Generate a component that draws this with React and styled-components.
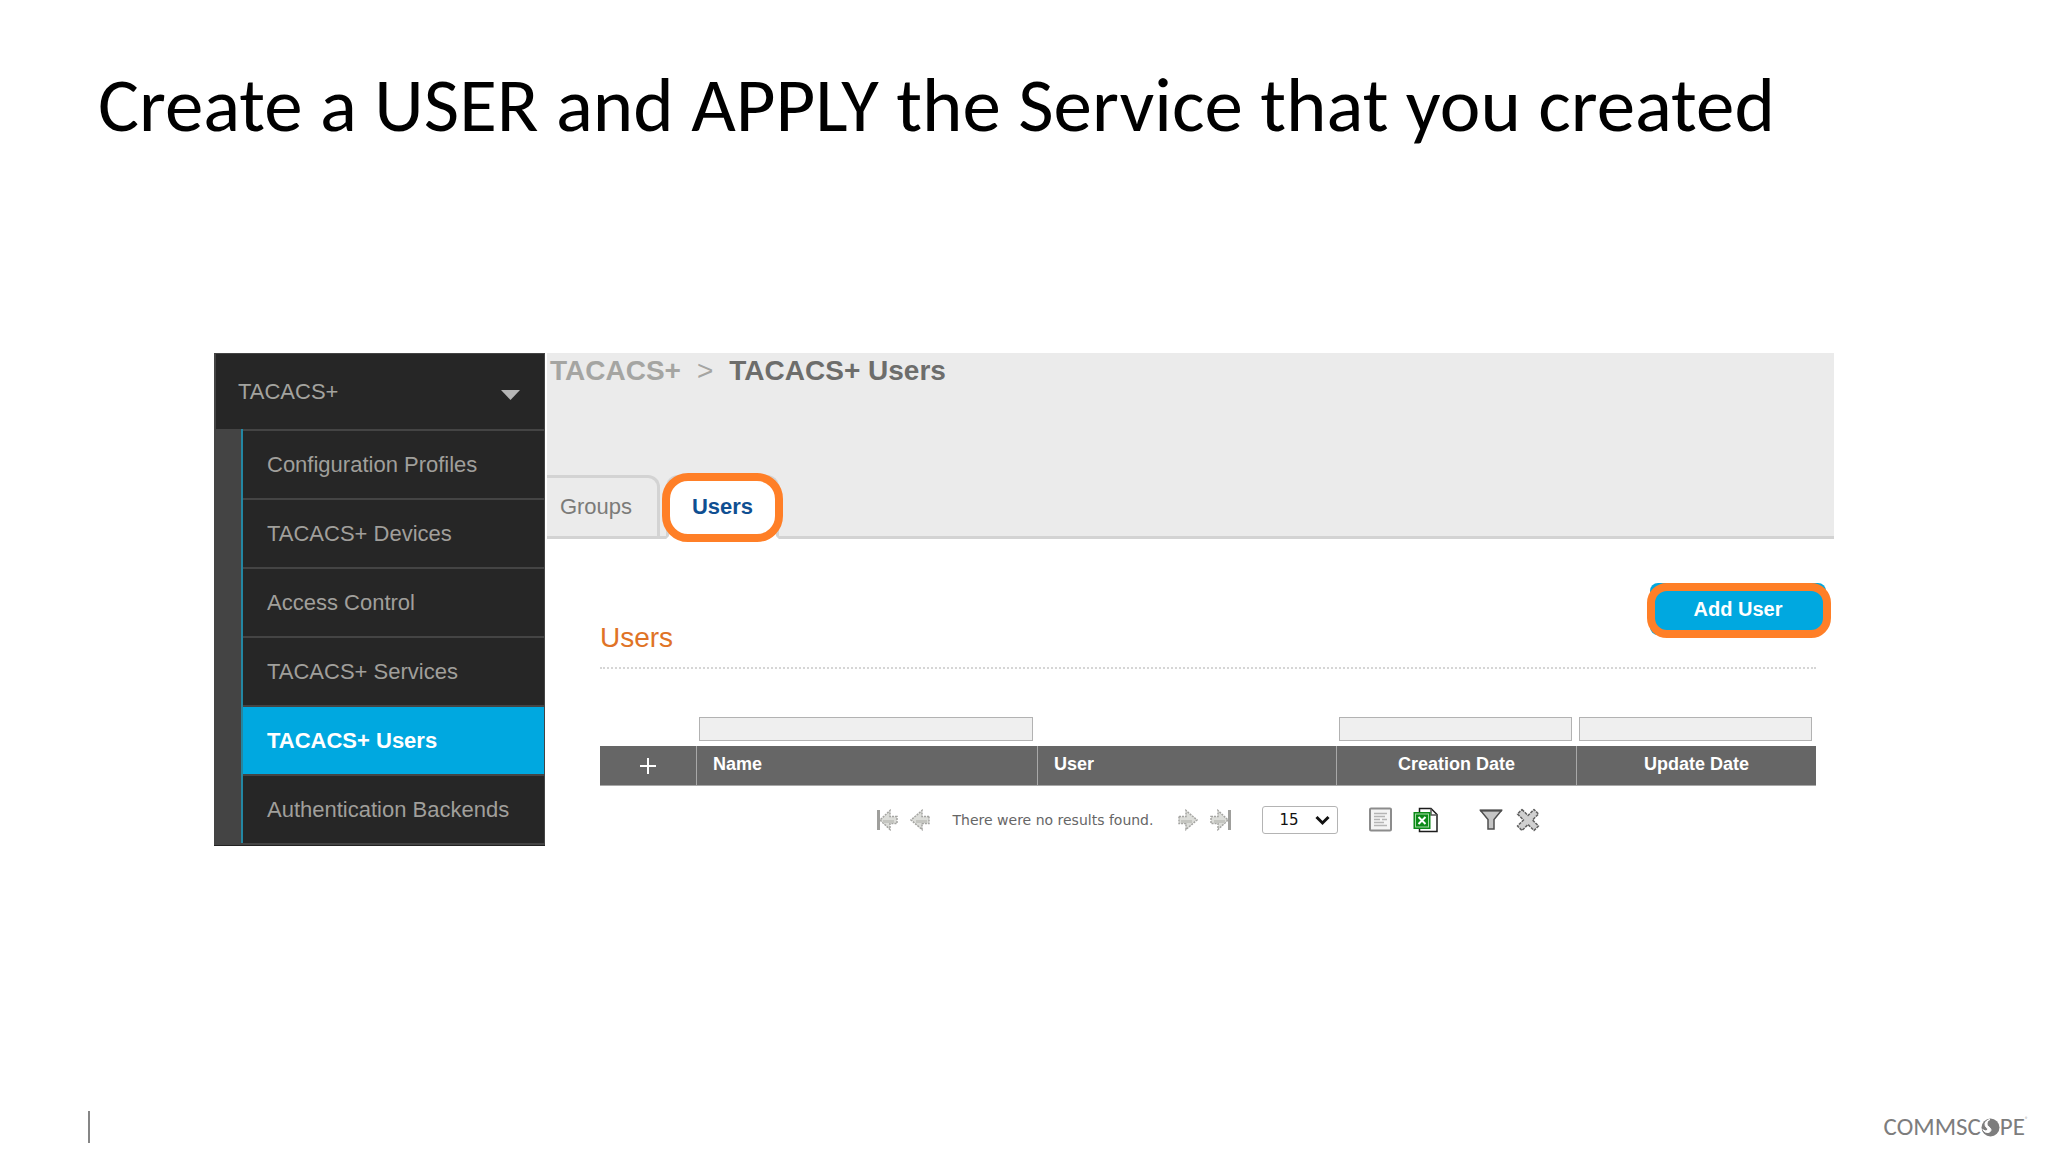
import React from "react";
import styled, { createGlobalStyle } from "styled-components";

const GlobalStyle = createGlobalStyle`
  *, *::before, *::after { box-sizing: border-box; }
  body { margin: 0; background: #fff; }
  button, input, select { font: inherit; margin: 0; }
`;

const Slide = styled.div`
  min-height: 100vh;
  display: flex;
  flex-direction: column;
  font-family: "Liberation Sans", Arial, sans-serif;
`;

const Title = styled.h1`
  margin: 0;
  padding: 65px 98px 0;
  font: 400 77px/80px Carlito, Lato, sans-serif;
  color: #000;
`;

const Panel = styled.div`
  display: flex;
  align-items: flex-start;
  margin: 208px 214px 0;
`;

const Sidebar = styled.nav`
  flex: none;
  width: 331px;
  padding: 0 1px 2px 2px;
  background: #444;
  border-bottom: 1px solid #222;
  font-size: 22px;
  line-height: 26px;
`;

const MenuHead = styled.button`
  display: flex;
  align-items: center;
  justify-content: space-between;
  width: 100%;
  height: 76px;
  padding: 0 24px 0 22px;
  border: 0;
  border-top: 1px solid #444;
  background: #262626;
  color: #a3a39f;
  svg { margin-top: 6px; }
`;

const MenuList = styled.ul`
  list-style: none;
  margin: 0 0 0 25px;
  padding: 0;
  border-left: 2px solid #2387a3;
`;

const MenuLink = styled.a`
  display: flex;
  align-items: center;
  height: 69px;
  padding-left: 24px;
  border-top: 2px solid #444;
  background: ${(p) => (p.$active ? "#00a8e0" : "#262626")};
  color: ${(p) => (p.$active ? "#fff" : "#a09f9b")};
  font-weight: ${(p) => (p.$active ? 700 : 400)};
  text-decoration: none;
`;

const Main = styled.main`
  flex: 1;
  min-width: 0;
  margin-left: 2px;
`;

const Header = styled.header`
  display: flex;
  flex-direction: column;
  justify-content: space-between;
  height: 186px;
  background: #ebebeb;
  border-bottom: 3px solid #d3d3d3;
`;

const Crumbs = styled.div`
  display: flex;
  gap: 16px;
  padding-left: 3px;
  font-size: 28px;
  line-height: 36px;
  font-weight: 700;
  color: #6d6d6b;
`;

const CrumbLink = styled.a`
  color: #a5a5a2;
  text-decoration: none;
`;

const CrumbMark = styled.span`
  color: #a5a5a2;
  font-weight: 400;
`;

const Tabs = styled.div`
  display: flex;
  gap: 6px;
  margin-bottom: -3px;
`;

const Tab = styled.button`
  position: relative;
  height: 64px;
  width: 113px;
  padding: 0;
  border: 3px solid #d3d3d3;
  border-left-width: ${(p) => (p.$active ? 3 : 0)}px;
  border-bottom-color: ${(p) => (p.$active ? "#fff" : "#d3d3d3")};
  border-radius: ${(p) => (p.$active ? "12px 12px 0 0" : "0 12px 0 0")};
  background: ${(p) => (p.$active ? "#fff" : "#ebebeb")};
  color: ${(p) => (p.$active ? "#0f4f92" : "#7b7b79")};
  font-size: 22px;
  line-height: 26px;
  font-weight: ${(p) => (p.$active ? 700 : 400)};
  padding-right: ${(p) => (p.$active ? 0 : 12)}px;
`;

const Ring = styled.span`
  position: absolute;
  inset: ${(p) => p.$inset};
  border: ${(p) => p.$size}px solid #ff7f27;
  border-radius: ${(p) => p.$radius}px;
  pointer-events: none;
`;

const Content = styled.section`
  padding: 44px 18px 0 53px;
`;

const TitleRow = styled.div`
  display: flex;
  justify-content: space-between;
  height: 86px;
  border-bottom: 2px dotted #d6d6d6;
`;

const Heading = styled.h2`
  align-self: flex-end;
  margin: 0 0 13px;
  font-size: 28px;
  line-height: 32px;
  font-weight: 400;
  color: #e07326;
`;

const AddButton = styled.button`
  position: relative;
  width: 176px;
  height: 52px;
  margin-right: -10px;
  padding: 0;
  border: 0;
  border-radius: 8px;
  background: #00a8e0;
  color: #fff;
  font-size: 20px;
  font-weight: 700;
`;

const Grid = styled.table`
  width: 100%;
  margin-top: 48px;
  border-collapse: separate;
  border-spacing: 0;
  table-layout: fixed;
`;

const Col = styled.col`
  width: calc(100% * ${(p) => p.$share} / 1216);
`;

const FilterCell = styled.td`
  height: 29px;
  padding: 0 4px 5px 3px;
`;

const FilterInput = styled.input`
  display: block;
  width: 100%;
  height: 24px;
  border: 1px solid #b2b2b2;
  border-radius: 0;
  background: #efefef;
`;

const HeadCell = styled.th`
  height: 40px;
  padding: ${(p) => (p.$center ? "0 0 3px" : "0 0 3px 16px")};
  text-align: ${(p) => (p.$center ? "center" : "left")};
  background: #666;
  border-bottom: 1px solid #a8a8a8;
  border-left: ${(p) => (p.$first ? "0" : "1px solid #a8a8a8")};
  color: #fff;
  font-size: 18px;
  line-height: 22px;
`;

const PlusButton = styled.button`
  display: block;
  margin: 3px auto 0;
  padding: 0;
  border: 0;
  background: none;
  svg { display: block; }
`;

const Pager = styled.div`
  display: flex;
  align-items: center;
  justify-content: center;
  height: 28px;
  margin: 20px 0 0;
  font-family: Verdana, "DejaVu Sans", sans-serif;
  font-size: 14px;
  line-height: 20px;
  color: #666;
`;

const Group = styled.div`
  display: flex;
  align-items: center;
  gap: ${(p) => p.$gap}px;
  margin-right: ${(p) => p.$after || 0}px;
`;

const Status = styled.span`
  margin-right: 24px;
`;

const IconButton = styled.button`
  display: block;
  padding: 0;
  border: 0;
  background: none;
  svg { display: block; }
`;

const SelectWrap = styled.label`
  position: relative;
  display: block;
  svg { position: absolute; right: 8px; top: 9px; pointer-events: none; }
`;

const PageSize = styled.select`
  display: block;
  appearance: none;
  width: 76px;
  height: 28px;
  padding: 0 0 0 16px;
  border: 1px solid #b4b4b4;
  border-radius: 3px;
  background: #fff;
  color: #111;
  font-size: 15px;
`;

const Footer = styled.footer`
  display: flex;
  align-items: center;
  justify-content: space-between;
  margin-top: auto;
  padding: 0 20px 9px 88px;
`;

const FooterRule = styled.span`
  width: 2px;
  height: 32px;
  background: #868686;
`;

const Brand = styled.div`
  display: flex;
  align-items: center;
  font: 400 25px/28px Carlito, Lato, sans-serif;
  color: #7d7d7d;
  sup { align-self: flex-start; font-size: 6px; line-height: 12px; }
`;

const arrow = "M2 7.500 H9 V1.500 L20 11 L9 20.500 V14.500 H2 Z";
const arrowStopped = "M1 7.500 H8 V1.500 L18 11 L8 20.500 V14.500 H1 Z";

function Arrow({ back, stop }) {
  return (
    <svg width="22" height="22" viewBox="0 0 22 22">
      <g transform={back ? "translate(22 0) scale(-1 1)" : undefined}>
        <path d={stop ? arrowStopped : arrow} fill="#dcddd9" stroke="#a5a5a2" strokeWidth="1.500" strokeDasharray="2 1" />
        <path d="M4 12.500 H15" stroke="#c4c5c0" strokeWidth="3" />
        {stop && <path d="M19.500 1 V21" stroke="#9f9f9c" strokeWidth="3" />}
      </g>
    </svg>
  );
}

const PageIcon = () => (
  <svg width="24" height="26" viewBox="0 0 24 26">
    <rect x="1" y="1.500" width="21" height="22" rx="1" fill="#f4f4f4" stroke="#8c8c8c" strokeWidth="2" />
    <path d="M5 6.500H18M5 9.500H16M5 12.500H11M13 12.500H18M5 15.500H15M5 18.500H18" stroke="#b5b5b5" strokeWidth="1.500" />
  </svg>
);

const ExcelIcon = () => (
  <svg width="26" height="26" viewBox="0 0 26 26">
    <path d="M6.500 1.500H18L24 7.500V24.500H6.500Z" fill="#fff" stroke="#1c1c1c" strokeWidth="1.500" />
    <path d="M18 1.500V8H24" fill="none" stroke="#555" strokeWidth="1.500" />
    <rect x="0.500" y="5" width="17" height="17" fill="#0b8a17" />
    <rect x="2.500" y="7" width="13" height="13" fill="none" stroke="#a5dba5" strokeWidth="1" />
    <path d="M5.500 10L12.500 17M12.500 10L5.500 17" stroke="#fff" strokeWidth="2" />
  </svg>
);

const FunnelIcon = () => (
  <svg width="24" height="22" viewBox="0 0 24 22">
    <path d="M1.500 1.500H22.500L15 10.500V20H9V10.500Z" fill="#c4c4c4" stroke="#4d4d4d" strokeWidth="1.500" />
    <path d="M1 1.500H23" stroke="#4d4d4d" strokeWidth="2" />
  </svg>
);

const CrossIcon = () => (
  <svg width="24" height="24" viewBox="0 0 24 24">
    <path
      d="M6 1.500L12 7.500L18 1.500L22.500 6L16.500 12L22.500 18L18 22.500L12 16.500L6 22.500L1.500 18L7.500 12L1.500 6Z"
      fill="#d0d0d0"
      stroke="#5f5f5f"
      strokeWidth="1.500"
      strokeLinejoin="round"
      strokeDasharray="3 1"
    />
  </svg>
);

const Globe = () => (
  <svg width="19" height="19" viewBox="0 0 19 19" aria-hidden="true">
    <circle cx="9.500" cy="9.500" r="9" fill="#7d7d7d" />
    <path d="M9 1.500C5.500 3 5 7 8 9C11 11 10.500 14 7 14.500C4.500 14.800 3 13.500 1.800 11.500C3 13 6 13.500 6.500 11.500C7 10 3.500 9 4 5.500C4.500 3.500 6.500 1.800 9 1.500Z" fill="#fff" stroke="#fff" strokeWidth="1" />
  </svg>
);

const MENU = [
  "Configuration Profiles",
  "TACACS+ Devices",
  "Access Control",
  "TACACS+ Services",
  "TACACS+ Users",
  "Authentication Backends",
];

const COLUMN_SHARES = [96, 341, 299, 240, 240];

export default function App() {
  return (
    <Slide>
      <GlobalStyle />
      <Title>Create a USER and APPLY the Service that you created</Title>
      <Panel>
        <Sidebar>
          <MenuHead>
            TACACS+
            <svg width="19" height="10" viewBox="0 0 19 10">
              <path d="M0 0H19L9.500 10Z" fill="#b5b5b5" />
            </svg>
          </MenuHead>
          <MenuList>
            {MENU.map((m) => (
              <li key={m}>
                <MenuLink href="#" $active={m === "TACACS+ Users"}>{m}</MenuLink>
              </li>
            ))}
          </MenuList>
        </Sidebar>
        <Main>
          <Header>
            <Crumbs>
              <CrumbLink href="#">TACACS+</CrumbLink>
              <CrumbMark>&gt;</CrumbMark>
              <span>TACACS+ Users</span>
            </Crumbs>
            <Tabs>
              <Tab>Groups</Tab>
              <Tab $active>
                Users
                <Ring $inset="-5px -7px -6px" $size={8} $radius={26} />
              </Tab>
            </Tabs>
          </Header>
          <Content>
            <TitleRow>
              <Heading>Users</Heading>
              <AddButton>
                Add User
                <Ring $inset="0 -5px -3px -3px" $size={8} $radius={20} />
              </AddButton>
            </TitleRow>
            <Grid>
              <colgroup>
                {COLUMN_SHARES.map((share, i) => (
                  <Col key={i} $share={share} />
                ))}
              </colgroup>
              <thead>
                <tr>
                  <FilterCell />
                  <FilterCell><FilterInput aria-label="Filter by name" /></FilterCell>
                  <FilterCell />
                  <FilterCell><FilterInput aria-label="Filter by creation date" /></FilterCell>
                  <FilterCell><FilterInput aria-label="Filter by update date" /></FilterCell>
                </tr>
                <tr>
                  <HeadCell $first $center>
                    <PlusButton aria-label="Expand all">
                      <svg width="16" height="16" viewBox="0 0 16 16">
                        <path d="M8 0V16M0 8H16" stroke="#fff" strokeWidth="2" />
                      </svg>
                    </PlusButton>
                  </HeadCell>
                  <HeadCell>Name</HeadCell>
                  <HeadCell>User</HeadCell>
                  <HeadCell $center>Creation Date</HeadCell>
                  <HeadCell $center>Update Date</HeadCell>
                </tr>
              </thead>
            </Grid>
            <Pager>
              <Group $gap={11} $after={22}>
                <IconButton aria-label="First page"><Arrow back stop /></IconButton>
                <IconButton aria-label="Previous page"><Arrow back /></IconButton>
              </Group>
              <Status>There were no results found.</Status>
              <Group $gap={11} $after={30}>
                <IconButton aria-label="Next page"><Arrow /></IconButton>
                <IconButton aria-label="Last page"><Arrow stop /></IconButton>
              </Group>
              <Group $gap={0} $after={31}>
                <SelectWrap>
                  <PageSize aria-label="Rows per page" defaultValue="15">
                    <option>15</option>
                    <option>30</option>
                  </PageSize>
                  <svg width="15" height="11" viewBox="0 0 15 11">
                    <path d="M1.500 2L7.500 8L13.500 2" fill="none" stroke="#111" strokeWidth="3" />
                  </svg>
                </SelectWrap>
              </Group>
              <Group $gap={20} $after={40}>
                <IconButton aria-label="Report"><PageIcon /></IconButton>
                <IconButton aria-label="Export to Excel"><ExcelIcon /></IconButton>
              </Group>
              <Group $gap={13}>
                <IconButton aria-label="Filter"><FunnelIcon /></IconButton>
                <IconButton aria-label="Clear filter"><CrossIcon /></IconButton>
              </Group>
            </Pager>
          </Content>
        </Main>
      </Panel>
      <Footer>
        <FooterRule />
        <Brand>
          <span>COMMSC</span>
          <Globe />
          <span>PE</span>
          <sup>®</sup>
        </Brand>
      </Footer>
    </Slide>
  );
}
